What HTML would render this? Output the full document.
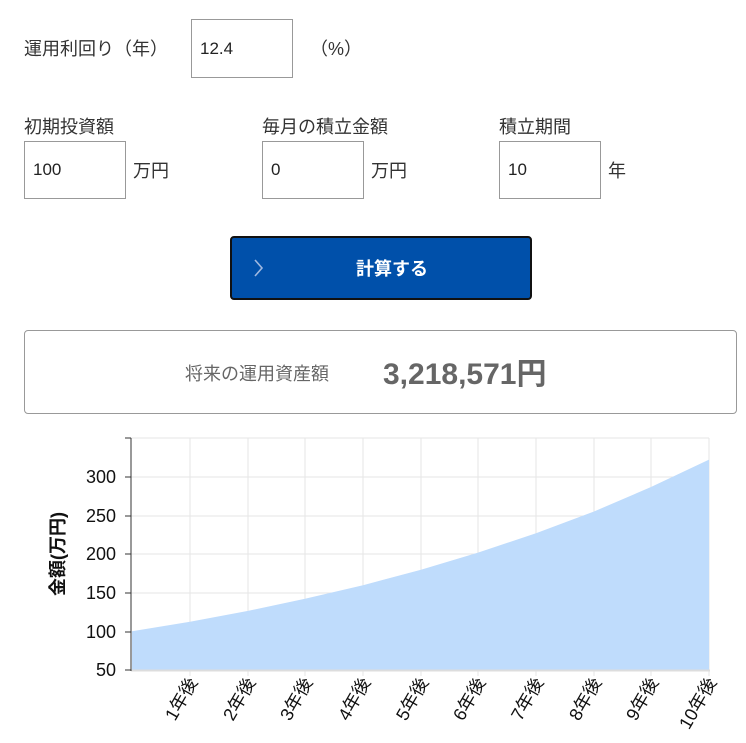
<!DOCTYPE html>
<html><head><meta charset="utf-8"><style>
body{margin:0;width:746px;height:743px;background:#fff;font-family:"Liberation Sans","Noto Sans CJK JP",sans-serif;color:#333;position:relative;overflow:hidden}
.a{position:absolute}
.lbl{font-size:18px;color:#333}
.inp{position:absolute;border:1px solid #999;box-sizing:border-box;background:#fff;font-size:17px;color:#222;padding-left:8px;display:flex;align-items:center}
</style></head><body>
<div class="a lbl" style="left:24px;top:35px">運用利回り（年）</div>
<div class="inp" style="left:191px;top:19px;width:102px;height:59px">12.4</div>
<div class="a lbl" style="left:310px;top:35px">（%）</div>

<div class="a lbl" style="left:24px;top:113px">初期投資額</div>
<div class="a lbl" style="left:262px;top:113px">毎月の積立金額</div>
<div class="a lbl" style="left:499px;top:113px">積立期間</div>
<div class="inp" style="left:24px;top:141px;width:102px;height:58px">100</div>
<div class="a lbl" style="left:133px;top:157px">万円</div>
<div class="inp" style="left:262px;top:141px;width:102px;height:58px">0</div>
<div class="a lbl" style="left:371px;top:157px">万円</div>
<div class="inp" style="left:499px;top:141px;width:102px;height:58px">10</div>
<div class="a lbl" style="left:608px;top:157px">年</div>

<div class="a" style="left:230px;top:236px;width:302px;height:64px;box-sizing:border-box;background:#0050aa;border:2px solid #111;border-radius:4px;color:#fff;font-size:18px;font-weight:bold;display:flex;align-items:center;justify-content:center;padding-left:22px">計算する</div>
<svg class="a" style="left:252px;top:258px" width="14" height="22"><path d="M3 2 L10 10 L3 18" stroke="#9fb8e0" stroke-width="1.6" fill="none"/></svg>

<div class="a" style="left:24px;top:330px;width:713px;height:84px;box-sizing:border-box;border:1px solid #999;border-radius:4px"></div>
<div class="a" style="left:185px;top:360px;font-size:18px;color:#666">将来の運用資産額</div>
<div class="a" style="left:383px;top:349px;font-size:30px;font-weight:bold;color:#666">3,218,571円</div>

<svg class="a" style="left:0;top:420px" width="746" height="323">
<g stroke="#e6e6e6" stroke-width="1">
<line x1="131" y1="18" x2="709" y2="18"/><line x1="131" y1="57" x2="709" y2="57"/><line x1="131" y1="96" x2="709" y2="96"/><line x1="131" y1="134" x2="709" y2="134"/><line x1="131" y1="173" x2="709" y2="173"/><line x1="131" y1="212" x2="709" y2="212"/>
<line x1="190" y1="18" x2="190" y2="256"/><line x1="248" y1="18" x2="248" y2="256"/><line x1="305" y1="18" x2="305" y2="256"/><line x1="363" y1="18" x2="363" y2="256"/><line x1="421" y1="18" x2="421" y2="256"/><line x1="478" y1="18" x2="478" y2="256"/><line x1="536" y1="18" x2="536" y2="256"/><line x1="594" y1="18" x2="594" y2="256"/><line x1="651" y1="18" x2="651" y2="256"/><line x1="709" y1="18" x2="709" y2="256"/>
</g>
<path d="M132 211.3 L190 201.7 L248 190.9 L305 178.8 L363 165.2 L421 149.8 L478 132.6 L536 113.2 L594 91.5 L651 67 L709 39.6 L709 250 L132 250Z" fill="#bfdcfc"/>
<line x1="131" y1="250.5" x2="710" y2="250.5" stroke="#ddd" stroke-width="2"/>
<g stroke="#333" stroke-width="1">
<line x1="131" y1="18" x2="131" y2="251"/>
<line x1="125" y1="18" x2="131" y2="18"/><line x1="125" y1="57" x2="131" y2="57"/><line x1="125" y1="96" x2="131" y2="96"/><line x1="125" y1="134" x2="131" y2="134"/><line x1="125" y1="173" x2="131" y2="173"/><line x1="125" y1="212" x2="131" y2="212"/><line x1="125" y1="250" x2="131" y2="250"/>
</g>
<g font-size="18" fill="#111" text-anchor="end" font-family="Liberation Sans,sans-serif">
<text x="116" y="63">300</text><text x="116" y="102">250</text><text x="116" y="140">200</text><text x="116" y="179">150</text><text x="116" y="218">100</text><text x="116" y="256">50</text>
</g>
<text transform="translate(64,134) rotate(-90)" text-anchor="middle" font-size="18" font-weight="bold" fill="#111">金額(万円)</text>
<g font-size="18" fill="#111" text-anchor="end">
<text transform="translate(198,262) rotate(-60)">1年後</text>
<text transform="translate(256,262) rotate(-60)">2年後</text>
<text transform="translate(313,262) rotate(-60)">3年後</text>
<text transform="translate(371,262) rotate(-60)">4年後</text>
<text transform="translate(429,262) rotate(-60)">5年後</text>
<text transform="translate(486,262) rotate(-60)">6年後</text>
<text transform="translate(544,262) rotate(-60)">7年後</text>
<text transform="translate(602,262) rotate(-60)">8年後</text>
<text transform="translate(659,262) rotate(-60)">9年後</text>
<text transform="translate(717,262) rotate(-60)">10年後</text>
</g>
</svg>
</body></html>
